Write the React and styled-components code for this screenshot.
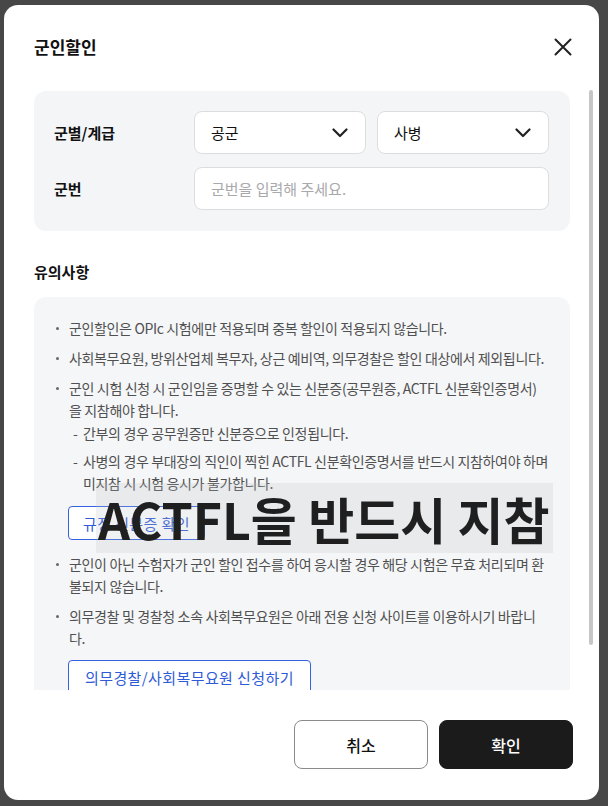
import React from "react";
import styled, { createGlobalStyle } from "styled-components";

const GlobalStyle = createGlobalStyle`
  * { box-sizing: border-box; }
  body {
    margin: 0;
    background: #474747;
    font-family: "Noto Sans CJK KR", "Noto Sans", sans-serif;
  }
`;

const NOTES = [
  { text: "군인할인은 OPIc 시험에만 적용되며 중복 할인이 적용되지 않습니다." },
  { text: "사회복무요원, 방위산업체 복무자, 상근 예비역, 의무경찰은 할인 대상에서 제외됩니다." },
  {
    text: "군인 시험 신청 시 군인임을 증명할 수 있는 신분증(공무원증, ACTFL 신분확인증명서)을 지참해야 합니다.",
    subs: [
      "간부의 경우 공무원증만 신분증으로 인정됩니다.",
      "사병의 경우 부대장의 직인이 찍힌 ACTFL 신분확인증명서를 반드시 지참하여야 하며 미지참 시 시험 응시가 불가합니다.",
    ],
    link: "규정 신분증 확인",
  },
  { text: "군인이 아닌 수험자가 군인 할인 접수를 하여 응시할 경우 해당 시험은 무효 처리되며 환불되지 않습니다." },
  {
    text: "의무경찰 및 경찰청 소속 사회복무요원은 아래 전용 신청 사이트를 이용하시기 바랍니다.",
    link: "의무경찰/사회복무요원 신청하기",
  },
];

export default function App() {
  return (
    <>
      <GlobalStyle />
      <Backdrop>
        <Modal>
          <Header>
            <Title>군인할인</Title>
            <CloseBtn aria-label="닫기">
              <svg width="18" height="18" viewBox="0 0 18 18">
                <path d="M1.5 1.5 16.5 16.5 M16.5 1.5 1.5 16.5" stroke="#222" strokeWidth="2" strokeLinecap="round" />
              </svg>
            </CloseBtn>
          </Header>

          <Body>
            <Scroll>
              <FormBox>
                <FormRow>
                  <Label>군별/계급</Label>
                  <Fields>
                    <Select>
                      공군
                      <Chevron />
                    </Select>
                    <Select>
                      사병
                      <Chevron />
                    </Select>
                  </Fields>
                </FormRow>
                <FormRow>
                  <Label>군번</Label>
                  <Input placeholder="군번을 입력해 주세요." />
                </FormRow>
              </FormBox>

              <SectionTitle>유의사항</SectionTitle>

              <NotesBox>
                <NoteList>
                  {NOTES.map((n, i) => (
                    <NoteItem key={i}>
                      {n.text}
                      {n.subs && (
                        <SubList>
                          {n.subs.map((s, j) => (
                            <SubItem key={j} $first={j === 0}>
                              {s}
                            </SubItem>
                          ))}
                        </SubList>
                      )}
                      {n.link && <LinkBtn $tight={!!n.subs}>{n.link}</LinkBtn>}
                    </NoteItem>
                  ))}
                </NoteList>
                <Callout>ACTFL을 반드시 지참</Callout>
              </NotesBox>
            </Scroll>
            <Track>
              <Thumb />
            </Track>
          </Body>

          <Footer>
            <FooterBtn>취소</FooterBtn>
            <FooterBtn $primary>확인</FooterBtn>
          </Footer>
        </Modal>
      </Backdrop>
    </>
  );
}

function Chevron() {
  return (
    <svg width="16" height="10" viewBox="0 0 16 10">
      <path d="M1.5 1.5 8 8 14.5 1.5" fill="none" stroke="#222" strokeWidth="2.2" strokeLinecap="round" strokeLinejoin="round" />
    </svg>
  );
}

const Backdrop = styled.div`
  width: 608px;
  height: 806px;
  padding: 5px 9px 6px 4px;
`;

const Modal = styled.div`
  width: 595px;
  height: 795px;
  background: #fff;
  border-radius: 14px;
  display: flex;
  flex-direction: column;
  overflow: hidden;
`;

const Header = styled.div`
  height: 86px;
  flex: none;
  display: flex;
  align-items: flex-start;
  justify-content: space-between;
  padding: 29px 25px 0 30px;
`;

const Title = styled.h2`
  margin: 0;
  font-size: 17px;
  line-height: 26px;
  font-weight: 700;
  color: #111;
`;

const CloseBtn = styled.button`
  border: none;
  background: none;
  padding: 0;
  margin-top: 2px;
  width: 22px;
  height: 22px;
  display: flex;
  align-items: center;
  justify-content: center;
  cursor: pointer;
`;

const Body = styled.div`
  height: 599px;
  flex: none;
  display: flex;
  padding: 0 6px 0 30px;
`;

const Scroll = styled.div`
  width: 536px;
  overflow: hidden;
  margin-right: 19px;
`;

const Track = styled.div`
  width: 4px;
  height: 100%;
`;

const Thumb = styled.div`
  width: 4px;
  height: 555px;
  margin-top: -1px;
  border-radius: 2px;
  background: #c6c6c6;
`;

const FormBox = styled.div`
  background: #f4f5f7;
  border-radius: 12px;
  padding: 20px 21px 21px 20px;
  display: flex;
  flex-direction: column;
  gap: 13px;
`;

const FormRow = styled.div`
  display: flex;
  align-items: center;
`;

const Label = styled.div`
  width: 140px;
  flex: none;
  font-size: 15px;
  font-weight: 600;
  color: #111;
`;

const Fields = styled.div`
  flex: 1;
  display: flex;
  gap: 11px;
`;

const Select = styled.div`
  flex: 1;
  height: 43px;
  background: #fff;
  border: 1px solid #dcdddf;
  border-radius: 8px;
  padding: 0 17px 0 16px;
  display: flex;
  align-items: center;
  justify-content: space-between;
  font-size: 15px;
  color: #111;
`;

const Input = styled.input`
  flex: 1;
  height: 43px;
  background: #fff;
  border: 1px solid #dcdddf;
  border-radius: 8px;
  padding: 0 16px;
  font-family: inherit;
  font-size: 15px;
  color: #111;
  outline: none;
  &::placeholder {
    color: #a9a9ab;
  }
`;

const SectionTitle = styled.h3`
  margin: 30px 0 14px;
  font-size: 15px;
  line-height: 22px;
  font-weight: 700;
  color: #111;
`;

const NotesBox = styled.div`
  position: relative;
  background: #f5f6f8;
  border-radius: 12px;
  padding: 20px 22px 26px 20px;
`;

const NoteList = styled.ul`
  margin: 0;
  padding: 0;
  list-style: none;
  display: flex;
  flex-direction: column;
  gap: 8px;
`;

const NoteItem = styled.li`
  position: relative;
  padding-left: 15px;
  font-size: 14px;
  line-height: 22px;
  color: #505050;
  letter-spacing: -0.35px;
  word-break: break-all;
  &::before {
    content: "";
    position: absolute;
    left: 2px;
    top: 10px;
    width: 3px;
    height: 3px;
    border-radius: 50%;
    background: #666;
  }
`;

const SubList = styled.ul`
  margin: 0;
  padding: 0;
  list-style: none;
`;

const SubItem = styled.li`
  position: relative;
  margin-top: ${(p) => (p.$first ? "1px" : "6px")};
  padding-left: 14px;
  &::before {
    content: "-";
    position: absolute;
    left: 4px;
    top: 0;
  }
`;

const LinkBtn = styled.button`
  display: block;
  margin: ${(p) => (p.$tight ? "12px 0 5px -1px" : "11px 0 0 -1px")};
  height: 34px;
  padding: ${(p) => (p.$tight ? "0 14px" : "0 16px")};
  background: #fff;
  border: 1px solid #3560e0;
  border-radius: 4px;
  font-family: inherit;
  font-size: 15px;
  letter-spacing: 0.4px;
  color: #2f5ad8;
  cursor: pointer;
`;

const Callout = styled.div`
  position: absolute;
  left: 62px;
  top: 186px;
  width: 457px;
  height: 70px;
  background: rgba(188, 190, 194, 0.22);
  display: flex;
  align-items: center;
  padding-left: 2px;
  font-size: 50px;
  font-weight: 700;
  color: #1f1f1f;
  white-space: nowrap;
`;

const Footer = styled.div`
  height: 110px;
  flex: none;
  display: flex;
  justify-content: flex-end;
  gap: 11px;
  padding: 30px 26px 0 0;
`;

const FooterBtn = styled.button`
  width: 134px;
  height: 49px;
  border-radius: 8px;
  border: 1px solid ${(p) => (p.$primary ? "#1b1b1b" : "#8a8a8a")};
  background: ${(p) => (p.$primary ? "#1b1b1b" : "#fff")};
  color: ${(p) => (p.$primary ? "#fff" : "#111")};
  font-family: inherit;
  font-size: 16px;
  font-weight: 500;
  cursor: pointer;
`;
